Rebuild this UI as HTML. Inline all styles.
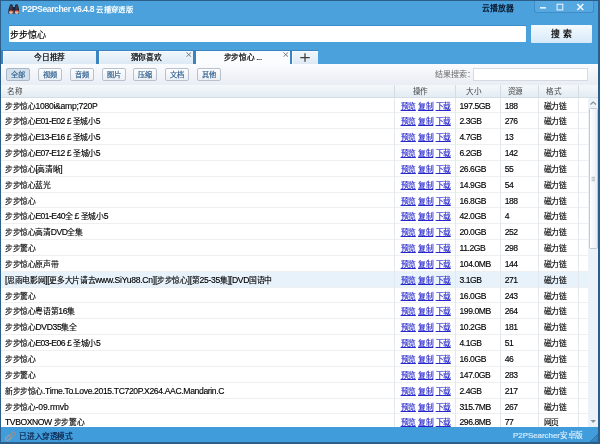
<!DOCTYPE html>
<html lang="zh-CN">
<head>
<meta charset="utf-8">
<title>P2PSearcher v6.4.8</title>
<style>
*{box-sizing:border-box;margin:0;padding:0}
html,body{width:600px;height:444px;overflow:hidden;background:#4aa1dc;font-family:"Liberation Sans",sans-serif;}
#win{will-change:transform;position:absolute;left:0;top:0;width:600px;height:444px;background:#4aa1dc;overflow:hidden}
.abs{position:absolute}
#title{left:22px;top:3px;font-size:8.6px;letter-spacing:-0.4px;font-weight:bold;color:#f4faff;white-space:nowrap;line-height:12px}
#title span{font-size:7.3px;letter-spacing:0.3px}
#cloud{left:482.3px;top:3.3px;font-size:7.8px;letter-spacing:-0.2px;font-weight:bold;color:#0a1a30;white-space:nowrap;line-height:12px}
#ctl{left:534px;top:0;width:60px;height:13px;background:#55a8e0;border:1px solid #3f8cc6;border-top:none;border-radius:0 0 3px 3px}
#inp{left:9px;top:25.7px;width:517px;height:16.2px;background:#fff;border-radius:1px;box-shadow:0 -0.7px 0 #3a86c0;font-size:9px;letter-spacing:-0.2px;line-height:18.6px;overflow:hidden;padding-left:1.4px;color:#000;-webkit-text-stroke:0.15px #000;white-space:nowrap}
#btn{left:531px;top:25px;width:61px;height:17.5px;background:linear-gradient(#f4faff,#d6e9f8);border-radius:1px;font-size:8.8px;font-weight:bold;line-height:19.8px;text-align:center;color:#1a1a1a;white-space:nowrap;overflow:hidden}
.tab{top:50.7px;height:13.4px;background:linear-gradient(#f0f7fd,#dde9f4);box-shadow:inset 0.8px 0.8px 0 #f8fcff;font-size:7.7px;letter-spacing:-0.3px;line-height:13.6px;text-align:center;color:#000;-webkit-text-stroke:0.22px #000;white-space:nowrap}
.tab.act{background:#fbfcfd}
.x{position:absolute;right:1.3px;top:1.5px;width:5.6px;height:5.2px}
#fbar{left:1.3px;top:64.3px;width:597px;height:21px;background:linear-gradient(#fafbfd,#e9edf4)}
.fb{top:68px;height:12.8px;width:24.4px;border:1px solid #b9c2cc;border-radius:2px;background:linear-gradient(#fdfdfe,#eceff4);font-size:7.2px;line-height:11px;text-align:center;color:#2a5c8c;-webkit-text-stroke:0.18px #2a5c8c;white-space:nowrap}
.fb.on{background:#d3dfeb;border-color:#a9b8c8}
#flabel{left:435px;top:69.2px;font-size:8px;line-height:11px;color:#6a6a6a;white-space:nowrap}
#finp{left:473.3px;top:68.2px;width:114.3px;height:12.4px;background:#fff;border:1px solid #d6dae1}
#hdr{left:1.3px;top:84.5px;width:597px;height:13px;background:linear-gradient(#f4f8fb,#e3ecf3);border-bottom:1px solid #d5dde5}
.h{position:absolute;top:0;height:12.5px;font-size:7.6px;letter-spacing:-0.3px;line-height:13px;color:#444;text-align:center;padding-right:9px;border-right:1px solid #d3dbe3;white-space:nowrap}
#list{left:1.3px;top:97.5px;width:587px;height:329px;background:#fff;overflow:hidden}
.row{position:relative;height:15.85px;width:587px;border-bottom:1px solid #edf0f3;white-space:nowrap}
.row.hl{background:#e8f2fb}
.c{position:absolute;top:0;height:15.85px;font-size:7.8px;letter-spacing:-0.38px;line-height:18.6px;color:#000;-webkit-text-stroke:0.14px #000;overflow:hidden;border-right:1px solid #e4e8ec}
.c1{left:0px;width:393.7px;padding-left:3.7px}
.c2{left:393.7px;width:60.8px;padding-left:5.6px}
.c3{left:454.5px;width:45.7px;padding-left:3.7px}
.c4{left:500.2px;width:38.0px;padding-left:3.2px}
.c5{left:538.2px;width:39.4px;padding-left:4.2px}
.c6{left:577.6px;width:9.4px;border-right:none}
.l{font-size:8.6px;letter-spacing:-0.45px;line-height:1px}
.p{margin:0 2px}
.c2{-webkit-text-stroke:0.15px #2626cc}
.k{display:inline-block;white-space:nowrap;text-align:justify;text-align-last:justify;text-justify:inter-character}
.c2 a{width:15.24px;color:#2626cc;text-decoration:underline;text-decoration-color:#2626cc;margin-right:2.25px}
#sb{left:588px;top:97.5px;width:10.5px;height:329px;background:#ecf2fa}
#thumb{left:588.8px;top:108.3px;width:8.8px;height:141px;border:1px solid #c3c7cf;border-radius:1.5px;background:linear-gradient(90deg,#ffffff,#eaeef6)}
#status{left:0;top:426.6px;width:600px;height:17.5px;background:#409cdb}
#st1{left:19.4px;top:430.8px;font-size:7.7px;letter-spacing:-0.42px;line-height:12px;color:#0a2045;-webkit-text-stroke:0.2px #0a2045;white-space:nowrap}
#st2{left:513px;top:430.3px;font-size:7.9px;line-height:12px;color:#dcf0ff;-webkit-text-stroke:0.15px #dcf0ff;white-space:nowrap}
#st2 span{font-size:7.7px;letter-spacing:-0.4px}
.bl{background:#2b5f8a}
</style>
</head>
<body>
<div id="win">
  <!-- title bar -->
  <svg class="abs" style="left:7.6px;top:3.5px" width="11.8" height="10.8" viewBox="0 0 11.8 10.8">
    <defs><linearGradient id="lens" x1="0" y1="0" x2="0" y2="1"><stop offset="0" stop-color="#c8452f"/><stop offset="0.55" stop-color="#f0a080"/><stop offset="1" stop-color="#fbe6da"/></linearGradient></defs>
    <path d="M1.9 1.3 Q1.9 0.3 3.2 0.3 Q4.6 0.3 4.6 1.3 L5.6 6 L5.6 9 Q5.6 10.5 3 10.5 Q0.4 10.5 0.4 9 L0.4 6 Z" fill="#1c2238"/>
    <path d="M9.9 1.3 Q9.9 0.3 8.6 0.3 Q7.2 0.3 7.2 1.3 L6.2 6 L6.2 9 Q6.2 10.5 8.8 10.5 Q11.4 10.5 11.4 9 L11.4 6 Z" fill="#1c2238"/>
    <rect x="4.8" y="3" width="2.2" height="3.4" fill="#1c2238"/>
    <path d="M2.5 1.6 L4 1.6 L4.6 5.6 L1.5 5.6 Z" fill="#4a3a44"/>
    <path d="M9.3 1.6 L7.8 1.6 L7.2 5.6 L10.3 5.6 Z" fill="#4a3a44"/>
    <rect x="1.1" y="6.2" width="3.8" height="3.5" rx="1.2" fill="url(#lens)"/>
    <rect x="6.9" y="6.2" width="3.8" height="3.5" rx="1.2" fill="url(#lens)"/>
  </svg>
  <div id="title" class="abs">P2PSearcher v6.4.8<span class="k" style="margin-left:2.2px;width:36.50px">云播穿透版</span></div>
  <div id="cloud" class="abs"><span class="k" style="width:31.21px">云播放器</span></div>
  <div id="ctl" class="abs"></div>
  <svg class="abs" style="left:534px;top:0" width="60" height="13" viewBox="0 0 60 13">
    <rect x="6" y="7.1" width="6" height="1.5" fill="#f2f8fe"/>
    <rect x="23.1" y="4.2" width="5.7" height="5.7" fill="none" stroke="#f2f8fe" stroke-width="1"/>
    <path d="M43.3 4 L49.3 10 M49.3 4 L43.3 10" stroke="#f4f9fe" stroke-width="1.5" fill="none"/>
  </svg>
  <!-- search -->
  <div id="inp" class="abs"><span class="k" style="width:35.21px">步步惊心</span></div>
  <div id="btn" class="abs">搜 索</div>
  <!-- tabs -->
  <div class="abs" style="left:1.3px;top:49.9px;width:316.5px;height:14.6px;background:#3b84bf"></div>
  <div class="abs" style="left:1.3px;top:64px;width:597px;height:1px;background:#9dbbd4"></div>
  <div class="tab abs" style="left:2.6px;width:93.9px"><span class="k" style="width:30.82px">今日推荐</span></div>
  <div class="tab abs" style="left:99px;width:94.3px"><span class="k" style="width:30.82px">猜你喜欢</span><svg class="x" viewBox="0 0 5.2 5.2" preserveAspectRatio="none"><path d="M0.4 0.4 L4.8 4.8 M4.8 0.4 L0.4 4.8" stroke="#6a747e" stroke-width="0.9" fill="none"/></svg></div>
  <div class="tab act abs" style="left:195.8px;width:93.8px;height:14.3px"><span class="k" style="width:30.82px">步步惊心</span> ...<svg class="x" viewBox="0 0 5.2 5.2" preserveAspectRatio="none"><path d="M0.4 0.4 L4.8 4.8 M4.8 0.4 L0.4 4.8" stroke="#6a747e" stroke-width="0.9" fill="none"/></svg></div>
  <div class="tab abs" style="left:291.8px;width:25.8px"><svg style="position:absolute;left:8px;top:2.4px" width="10" height="9" viewBox="0 0 10 9"><path d="M0.3 4.5 H9.7 M5 0.2 V8.8" stroke="#3c3c3c" stroke-width="1.25" fill="none"/></svg></div>
  <!-- filter bar -->
  <div id="fbar" class="abs"></div>
  <div class="fb on abs" style="left:6px">全部</div>
  <div class="fb abs" style="left:37.5px">视频</div>
  <div class="fb abs" style="left:69.5px">音频</div>
  <div class="fb abs" style="left:101.5px">图片</div>
  <div class="fb abs" style="left:133px">压缩</div>
  <div class="fb abs" style="left:164.5px">文档</div>
  <div class="fb abs" style="left:196.5px">其他</div>
  <div id="flabel" class="abs"><span class="k" style="width:40.00px">结果搜索：</span></div>
  <div id="finp" class="abs"></div>
  <!-- header -->
  <div id="hdr" class="abs">
    <div class="h" style="left:0px;width:393.7px;text-align:left;padding-left:5.6px">名称</div>
    <div class="h" style="left:393.7px;width:60.8px;">操作</div>
    <div class="h" style="left:454.5px;width:45.7px;">大小</div>
    <div class="h" style="left:500.2px;width:38.0px;">资源</div>
    <div class="h" style="left:538.2px;width:39.4px;">格式</div>
  </div>
  <!-- list -->
  <div id="list" class="abs">
<div class="row"><div class="c c1"><span class="t"><span class="k" style="width:30.48px">步步惊心</span><span class="l" style="letter-spacing:-0.28px">1080i&amp;amp;720P</span></span></div><div class="c c2"><a class="k">预览</a><a class="k">复制</a><a class="k">下载</a></div><div class="c c3"><span class="l">197.5GB</span></div><div class="c c4"><span class="l">188</span></div><div class="c c5"><span class="k" style="width:22.86px">磁力链</span></div><div class="c c6"></div></div>
<div class="row"><div class="c c1"><span class="t"><span class="k" style="width:30.48px">步步惊心</span><span class="l" style="letter-spacing:-0.61px">E01-E02<span class="p">£</span></span><span class="k" style="width:22.86px">圣城小</span><span class="l" style="letter-spacing:-0.61px">5</span></span></div><div class="c c2"><a class="k">预览</a><a class="k">复制</a><a class="k">下载</a></div><div class="c c3"><span class="l">2.3GB</span></div><div class="c c4"><span class="l">276</span></div><div class="c c5"><span class="k" style="width:22.86px">磁力链</span></div><div class="c c6"></div></div>
<div class="row"><div class="c c1"><span class="t"><span class="k" style="width:30.48px">步步惊心</span><span class="l" style="letter-spacing:-0.61px">E13-E16<span class="p">£</span></span><span class="k" style="width:22.86px">圣城小</span><span class="l" style="letter-spacing:-0.61px">5</span></span></div><div class="c c2"><a class="k">预览</a><a class="k">复制</a><a class="k">下载</a></div><div class="c c3"><span class="l">4.7GB</span></div><div class="c c4"><span class="l">13</span></div><div class="c c5"><span class="k" style="width:22.86px">磁力链</span></div><div class="c c6"></div></div>
<div class="row"><div class="c c1"><span class="t"><span class="k" style="width:30.48px">步步惊心</span><span class="l" style="letter-spacing:-0.60px">E07-E12<span class="p">£</span></span><span class="k" style="width:22.86px">圣城小</span><span class="l" style="letter-spacing:-0.60px">5</span></span></div><div class="c c2"><a class="k">预览</a><a class="k">复制</a><a class="k">下载</a></div><div class="c c3"><span class="l">6.2GB</span></div><div class="c c4"><span class="l">142</span></div><div class="c c5"><span class="k" style="width:22.86px">磁力链</span></div><div class="c c6"></div></div>
<div class="row"><div class="c c1"><span class="t"><span class="k" style="width:30.48px">步步惊心</span><span class="l" style="letter-spacing:-0.45px">[</span><span class="k" style="width:22.86px">高清晰</span><span class="l" style="letter-spacing:-0.45px">]</span></span></div><div class="c c2"><a class="k">预览</a><a class="k">复制</a><a class="k">下载</a></div><div class="c c3"><span class="l">26.6GB</span></div><div class="c c4"><span class="l">55</span></div><div class="c c5"><span class="k" style="width:22.86px">磁力链</span></div><div class="c c6"></div></div>
<div class="row"><div class="c c1"><span class="t"><span class="k" style="width:45.72px">步步惊心蓝光</span></span></div><div class="c c2"><a class="k">预览</a><a class="k">复制</a><a class="k">下载</a></div><div class="c c3"><span class="l">14.9GB</span></div><div class="c c4"><span class="l">54</span></div><div class="c c5"><span class="k" style="width:22.86px">磁力链</span></div><div class="c c6"></div></div>
<div class="row"><div class="c c1"><span class="t"><span class="k" style="width:30.48px">步步惊心</span></span></div><div class="c c2"><a class="k">预览</a><a class="k">复制</a><a class="k">下载</a></div><div class="c c3"><span class="l">16.8GB</span></div><div class="c c4"><span class="l">188</span></div><div class="c c5"><span class="k" style="width:22.86px">磁力链</span></div><div class="c c6"></div></div>
<div class="row"><div class="c c1"><span class="t"><span class="k" style="width:30.48px">步步惊心</span><span class="l" style="letter-spacing:-0.57px">E01-E40</span>全<span class="l" style="letter-spacing:-0.57px"><span class="p">£</span></span><span class="k" style="width:22.86px">圣城小</span><span class="l" style="letter-spacing:-0.57px">5</span></span></div><div class="c c2"><a class="k">预览</a><a class="k">复制</a><a class="k">下载</a></div><div class="c c3"><span class="l">42.0GB</span></div><div class="c c4"><span class="l">4</span></div><div class="c c5"><span class="k" style="width:22.86px">磁力链</span></div><div class="c c6"></div></div>
<div class="row"><div class="c c1"><span class="t"><span class="k" style="width:45.72px">步步惊心高清</span><span class="l" style="letter-spacing:-0.46px">DVD</span><span class="k" style="width:15.24px">全集</span></span></div><div class="c c2"><a class="k">预览</a><a class="k">复制</a><a class="k">下载</a></div><div class="c c3"><span class="l">20.0GB</span></div><div class="c c4"><span class="l">252</span></div><div class="c c5"><span class="k" style="width:22.86px">磁力链</span></div><div class="c c6"></div></div>
<div class="row"><div class="c c1"><span class="t"><span class="k" style="width:30.48px">步步驚心</span></span></div><div class="c c2"><a class="k">预览</a><a class="k">复制</a><a class="k">下载</a></div><div class="c c3"><span class="l">11.2GB</span></div><div class="c c4"><span class="l">298</span></div><div class="c c5"><span class="k" style="width:22.86px">磁力链</span></div><div class="c c6"></div></div>
<div class="row"><div class="c c1"><span class="t"><span class="k" style="width:53.34px">步步惊心原声带</span></span></div><div class="c c2"><a class="k">预览</a><a class="k">复制</a><a class="k">下载</a></div><div class="c c3"><span class="l">104.0MB</span></div><div class="c c4"><span class="l">144</span></div><div class="c c5"><span class="k" style="width:22.86px">磁力链</span></div><div class="c c6"></div></div>
<div class="row hl"><div class="c c1"><span class="t"><span class="l" style="letter-spacing:-0.27px">[</span><span class="k" style="width:38.10px">思雨电影网</span><span class="l" style="letter-spacing:-0.27px">][</span><span class="k" style="width:45.72px">更多大片请去</span><span class="l" style="letter-spacing:-0.27px">www.SiYu88.Cn][</span><span class="k" style="width:30.48px">步步惊心</span><span class="l" style="letter-spacing:-0.27px">][</span>第<span class="l" style="letter-spacing:-0.27px">25-35</span>集<span class="l" style="letter-spacing:-0.27px">][DVD</span><span class="k" style="width:22.86px">国语中</span></span></div><div class="c c2"><a class="k">预览</a><a class="k">复制</a><a class="k">下载</a></div><div class="c c3"><span class="l">3.1GB</span></div><div class="c c4"><span class="l">271</span></div><div class="c c5"><span class="k" style="width:22.86px">磁力链</span></div><div class="c c6"></div></div>
<div class="row"><div class="c c1"><span class="t"><span class="k" style="width:30.48px">步步驚心</span></span></div><div class="c c2"><a class="k">预览</a><a class="k">复制</a><a class="k">下载</a></div><div class="c c3"><span class="l">16.0GB</span></div><div class="c c4"><span class="l">243</span></div><div class="c c5"><span class="k" style="width:22.86px">磁力链</span></div><div class="c c6"></div></div>
<div class="row"><div class="c c1"><span class="t"><span class="k" style="width:53.34px">步步惊心粤语第</span><span class="l" style="letter-spacing:-0.45px">16</span>集</span></div><div class="c c2"><a class="k">预览</a><a class="k">复制</a><a class="k">下载</a></div><div class="c c3"><span class="l">199.0MB</span></div><div class="c c4"><span class="l">264</span></div><div class="c c5"><span class="k" style="width:22.86px">磁力链</span></div><div class="c c6"></div></div>
<div class="row"><div class="c c1"><span class="t"><span class="k" style="width:30.48px">步步惊心</span><span class="l" style="letter-spacing:-0.36px">DVD35</span><span class="k" style="width:15.24px">集全</span></span></div><div class="c c2"><a class="k">预览</a><a class="k">复制</a><a class="k">下载</a></div><div class="c c3"><span class="l">10.2GB</span></div><div class="c c4"><span class="l">181</span></div><div class="c c5"><span class="k" style="width:22.86px">磁力链</span></div><div class="c c6"></div></div>
<div class="row"><div class="c c1"><span class="t"><span class="k" style="width:30.48px">步步惊心</span><span class="l" style="letter-spacing:-0.57px">E03-E06<span class="p">£</span></span><span class="k" style="width:22.86px">圣城小</span><span class="l" style="letter-spacing:-0.57px">5</span></span></div><div class="c c2"><a class="k">预览</a><a class="k">复制</a><a class="k">下载</a></div><div class="c c3"><span class="l">4.1GB</span></div><div class="c c4"><span class="l">51</span></div><div class="c c5"><span class="k" style="width:22.86px">磁力链</span></div><div class="c c6"></div></div>
<div class="row"><div class="c c1"><span class="t"><span class="k" style="width:30.48px">步步惊心</span></span></div><div class="c c2"><a class="k">预览</a><a class="k">复制</a><a class="k">下载</a></div><div class="c c3"><span class="l">16.0GB</span></div><div class="c c4"><span class="l">46</span></div><div class="c c5"><span class="k" style="width:22.86px">磁力链</span></div><div class="c c6"></div></div>
<div class="row"><div class="c c1"><span class="t"><span class="k" style="width:30.48px">步步驚心</span></span></div><div class="c c2"><a class="k">预览</a><a class="k">复制</a><a class="k">下载</a></div><div class="c c3"><span class="l">147.0GB</span></div><div class="c c4"><span class="l">283</span></div><div class="c c5"><span class="k" style="width:22.86px">磁力链</span></div><div class="c c6"></div></div>
<div class="row"><div class="c c1"><span class="t"><span class="k" style="width:38.10px">新步步惊心</span><span class="l" style="letter-spacing:-0.36px">.Time.To.Love.2015.TC720P.X264.AAC.Mandarin.C</span></span></div><div class="c c2"><a class="k">预览</a><a class="k">复制</a><a class="k">下载</a></div><div class="c c3"><span class="l">2.4GB</span></div><div class="c c4"><span class="l">217</span></div><div class="c c5"><span class="k" style="width:22.86px">磁力链</span></div><div class="c c6"></div></div>
<div class="row"><div class="c c1"><span class="t"><span class="k" style="width:30.48px">步步惊心</span><span class="l" style="letter-spacing:-0.09px">-09.rmvb</span></span></div><div class="c c2"><a class="k">预览</a><a class="k">复制</a><a class="k">下载</a></div><div class="c c3"><span class="l">315.7MB</span></div><div class="c c4"><span class="l">267</span></div><div class="c c5"><span class="k" style="width:22.86px">磁力链</span></div><div class="c c6"></div></div>
<div class="row"><div class="c c1"><span class="t"><span class="l" style="letter-spacing:-0.42px">TVBOXNOW </span><span class="k" style="width:30.48px">步步驚心</span></span></div><div class="c c2"><a class="k">预览</a><a class="k">复制</a><a class="k">下载</a></div><div class="c c3"><span class="l">296.8MB</span></div><div class="c c4"><span class="l">77</span></div><div class="c c5"><span class="k" style="width:15.24px">网页</span></div><div class="c c6"></div></div>
  </div>
  <!-- scrollbar -->
  <div id="sb" class="abs"></div>
  <div id="thumb" class="abs"></div>
  <svg class="abs" style="left:588px;top:97.5px" width="10" height="329" viewBox="0 0 10 329">
    <path d="M2.5 6.5 L5.2 4 L8 6.5" stroke="#8a9098" stroke-width="1.2" fill="none"/>
    <path d="M2.5 322 L8 322 L5.2 325 Z" fill="#8a9098"/>
    <path d="M3.5 79.3 H7 M3.5 81 H7 M3.5 82.7 H7" stroke="#9aa0a8" stroke-width="0.7"/>
  </svg>
  <!-- status bar -->
  <div id="status" class="abs"></div>
  <svg class="abs" style="left:5.2px;top:430.8px" width="11" height="11" viewBox="0 0 11 11">
    <rect x="0.5" y="5.2" width="6" height="3.4" rx="1.7" transform="rotate(-40 3.5 7)" fill="none" stroke="#95a0aa" stroke-width="1.4"/>
    <rect x="4.5" y="2" width="6" height="3.4" rx="1.7" transform="rotate(-40 7.5 3.7)" fill="none" stroke="#86919b" stroke-width="1.4"/>
  </svg>
  <div id="st1" class="abs"><span class="k" style="width:53.07px">已进入穿透模式</span></div>
  <div id="st2" class="abs">P2PSearcher<span class="k" style="width:22.82px">安卓版</span></div>
  <svg class="abs" style="left:588px;top:432px" width="12" height="12" viewBox="0 0 12 12">
    <path d="M10 2 L2 10 L10 10 Z" fill="#3487c4" stroke="#2e6fa3" stroke-width="0.8"/>
  </svg>
  <!-- window borders -->
  <div class="abs bl" style="left:0;top:0;width:600px;height:1px"></div>
  <div class="abs bl" style="left:0;top:0;width:1.3px;height:444px"></div>
  <div class="abs bl" style="left:598.3px;top:0;width:1.7px;height:444px"></div>
  <div class="abs bl" style="left:0;top:442.3px;width:600px;height:1.7px"></div>
</div>
</body>
</html>
